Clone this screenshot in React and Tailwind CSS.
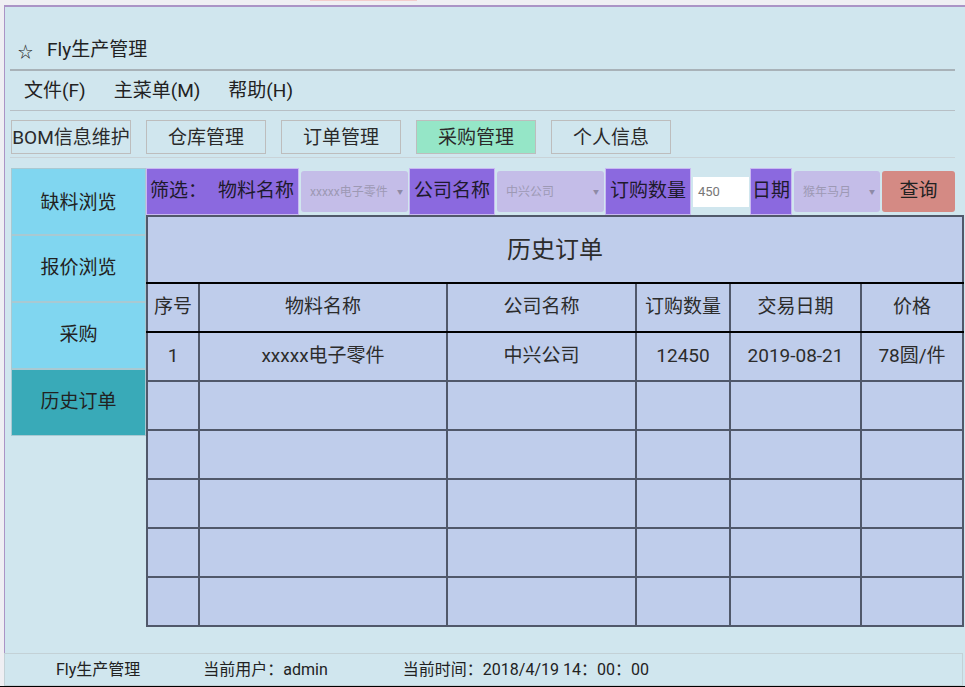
import React from 'react'

const font = { fontFamily: "Roboto, 'Noto Sans CJK SC', sans-serif" }

const tabs = ['BOM信息维护', '仓库管理', '订单管理', '采购管理', '个人信息']
const side = ['缺料浏览', '报价浏览', '采购', '历史订单']
const cols = [
  { name: '序号', w: 'w-[52px]', edge: 'border-l-[#50586a]' },
  { name: '物料名称', w: 'w-[248px]', edge: 'border-l-[#50586a]' },
  { name: '公司名称', w: 'w-[189px]', edge: 'border-l-black' },
  { name: '订购数量', w: 'w-[94px]', edge: 'border-l-black' },
  { name: '交易日期', w: 'w-[131px]', edge: 'border-l-[#262a33]' },
  { name: '价格', w: 'w-[102px]', edge: 'border-l-[#50586a]' },
]
const rows = [
  ['1', 'xxxxx电子零件', '中兴公司', '12450', '2019-08-21', '78圆/件'],
  ['', '', '', '', '', ''],
  ['', '', '', '', '', ''],
  ['', '', '', '', '', ''],
  ['', '', '', '', '', ''],
  ['', '', '', '', '', ''],
]
const rowEdge = ['border-t-black', 'border-t-[#4a5060]', 'border-t-[#5a6272]', 'border-t-black', 'border-t-black', 'border-t-[#4a5060]']

function Label({ children, className = '' }) {
  return (
    <div className={`h-[47px] shrink-0 flex items-center justify-center bg-[#8b69df] border border-[#c9b9f2] text-[19px] text-[#1e1a2c] ${className}`}>
      {children}
    </div>
  )
}

function Select({ text, className = '' }) {
  return (
    <div className={`h-[41px] shrink-0 flex items-center justify-between rounded-[3px] bg-[#c4bde8] pl-[9px] pr-[5px] ${className}`}>
      <span className="text-[12px] text-[#9d99b4]">{text}</span>
      <span className="text-[6px] text-[#8e8aa6]">▼</span>
    </div>
  )
}

export default function App() {
  return (
    <div className="w-[965px] h-[687px] bg-[#efeff3] flex flex-col overflow-hidden" style={font}>
      <div className="h-[5px] shrink-0">
        <div className="ml-[310px] w-[107px] h-[1px] bg-[#f3cccc]" />
      </div>
      <div className="flex-1 ml-[4px] border-t-2 border-l border-[#ab94c6] bg-[#d0e6ee] flex flex-col">
        <div className="h-[62px] flex items-end pb-[5px] pl-[13px] text-[19px] text-[#222]">
          <span className="text-[15px] mr-[14px] mb-[1px]">☆</span>
          <span>Fly生产管理</span>
        </div>
        <div className="ml-[5px] w-[945px] h-[2px] bg-[#a8b2b8]" />
        <div className="h-[39px] flex items-center pt-[2px] pl-[19px] gap-[28px] text-[19px] text-[#222]">
          <span>文件(F)</span>
          <span>主菜单(M)</span>
          <span>帮助(H)</span>
        </div>
        <div className="ml-[5px] w-[945px] h-[1px] bg-[#b7bfc5]" />
        <div className="h-[46px] pt-[9px] pl-[6px] flex gap-[15px]">
          {tabs.map((t) => (
            <div
              key={t}
              className={`w-[120px] h-[34px] pt-[2px] flex items-center justify-center border border-[#bdbdbd] text-[19px] text-[#2a2a2a] whitespace-nowrap ${t === '采购管理' ? 'bg-[#95e6c7]' : 'bg-[#d0e6ee]'}`}
            >
              {t}
            </div>
          ))}
        </div>
        <div className="ml-[5px] w-[945px] h-[1px] bg-[#c9d3d8]" />
        <div className="flex pt-[10px] pl-[6px]">
          <div className="w-[135px] flex flex-col">
            {side.map((s, i) => (
              <div
                key={s}
                className={`h-[67px] flex items-center justify-center border border-[#a9c9d2] text-[19px] text-[#222] ${i === 3 ? 'bg-[#39aab8]' : 'bg-[#80d6f0]'} ${i === 0 ? 'pt-[3px]' : ''}`}
              >
                {s}
              </div>
            ))}
          </div>
          <div className="w-[816px] flex flex-col">
            <div className="h-[47px] flex items-center">
              <Label className="w-[153px] justify-start pl-[3px] gap-[11px]">
                <span>筛选：</span>
                <span>物料名称</span>
              </Label>
              <Select text="xxxxx电子零件" className="w-[107px] ml-[2px]" />
              <Label className="w-[86px] ml-[1px]">公司名称</Label>
              <Select text="中兴公司" className="w-[107px] ml-[2px]" />
              <Label className="w-[86px] ml-[1px]">订购数量</Label>
              <div className="w-[56px] h-[30px] shrink-0 ml-[2px] bg-white flex items-center pl-[5px] text-[13px] text-[#777]">450</div>
              <Label className="w-[42px] ml-[1px]">日期</Label>
              <Select text="猴年马月" className="w-[86px] ml-[2px]" />
              <div className="w-[73px] h-[41px] shrink-0 ml-[2px] rounded-[3px] bg-[#d48a84] flex items-center justify-center text-[19px] text-[#222]">
                查询
              </div>
            </div>
            <table className="border-collapse table-fixed w-[816px] bg-[#bfcdeb] text-[19px] text-[#2c2c2c]">
              <colgroup>
                {cols.map((c) => (
                  <col key={c.name} className={c.w} />
                ))}
              </colgroup>
              <tbody>
                <tr>
                  <td colSpan={6} className="h-[67px] text-center text-[24px] border-2 border-[#50586a] border-b-black">
                    历史订单
                  </td>
                </tr>
                <tr>
                  {cols.map((c) => (
                    <td key={c.name} className={`h-[49px] text-center whitespace-nowrap border-2 border-[#50586a] border-t-black border-b-black ${c.edge}`}>
                      {c.name}
                    </td>
                  ))}
                </tr>
                {rows.map((r, ri) => (
                  <tr key={ri}>
                    {r.map((v, ci) => (
                      <td
                        key={ci}
                        className={`h-[49px] text-center whitespace-nowrap border-2 border-[#50586a] ${rowEdge[ri]} ${cols[ci].edge}`}
                      >
                        {v}
                      </td>
                    ))}
                  </tr>
                ))}
              </tbody>
            </table>
          </div>
        </div>
        <div className="flex-1" />
        <div className="h-[33px] -ml-[1px] w-[959px] border border-[#c3d1d6] flex items-center text-[16px] text-[#222]">
          <span className="ml-[51px]">Fly生产管理</span>
          <span className="ml-[63px]">当前用户：admin</span>
          <span className="ml-[75px]">当前时间：2018/4/19 14：00：00</span>
        </div>
        <div className="h-[1px] -ml-[5px] bg-black" />
      </div>
    </div>
  )
}
